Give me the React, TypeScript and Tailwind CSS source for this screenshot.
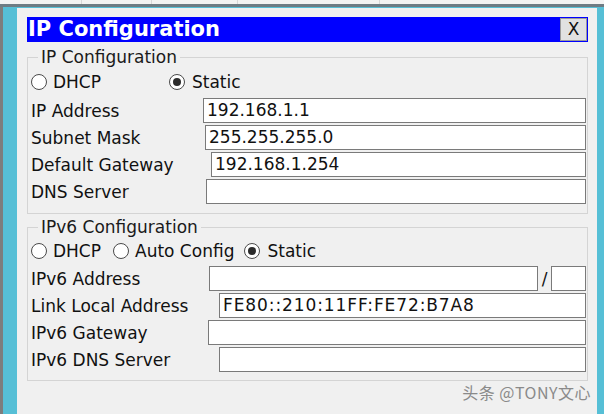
const ipv4Rows = [
  { label: "IP Address", left: 172, value: "192.168.1.1" },
  { label: "Subnet Mask", left: 174, value: "255.255.255.0" },
  { label: "Default Gateway", left: 180, value: "192.168.1.254" },
  { label: "DNS Server", left: 175, value: "" },
]

function Radio({ checked }: { checked?: boolean }) {
  return (
    <span className="flex h-[16px] w-[16px] flex-none items-center justify-center rounded-full border border-[#4a4a4a] bg-white">
      {checked && <span className="h-[8px] w-[8px] rounded-full bg-[#2b2b2b]" />}
    </span>
  )
}

function Field({ value, className = "" }: { value?: string; className?: string }) {
  return (
    <div
      className={
        "h-[25px] border border-[#7a7a7a] bg-white pl-[3px] text-[17px] leading-[23px] text-[#111] whitespace-nowrap overflow-hidden " +
        className
      }
    >
      {value}
    </div>
  )
}

export default function App() {
  return (
    <div className="flex h-[414px] w-[604px] flex-col overflow-hidden bg-[#56bfd6] font-['DejaVu_Sans',sans-serif] leading-[20px]">
      {/* strip of the window behind */}
      <div className="flex h-[4px] flex-none bg-[#f3f3f3]">
        <div className="w-[82px] border-r border-[#d8d8d8]" />
        <div className="w-[70px] border-r border-[#d8d8d8]" />
        <div className="w-[86px] border-r border-[#d8d8d8]" />
        <div className="w-[142px] border-r border-[#d8d8d8]" />
      </div>
      <div className="h-[3px] flex-none bg-[#6e7c84]" />

      <div className="flex flex-1 border-l-[3px] border-[#7d7d7d] pt-[1px]">
        <div className="ml-[14px] mr-[7px] flex flex-1 flex-col bg-[#f0f0f0] pl-[10px] pr-[9px] pt-[9px]">
          {/* title bar */}
          <div className="flex h-[25px] items-center justify-between bg-[#0000ff] pl-[1px]">
            <span className="text-[21px] font-bold leading-none text-white">IP Configuration</span>
            <button className="mr-[1px] flex h-[23px] w-[27px] items-center justify-center border border-[#9a9a9a] bg-[#e1e1e1] text-[17px] leading-none text-[#111]">
              X
            </button>
          </div>

          {/* IPv4 group */}
          <fieldset className="mt-[5px] border border-[#d4d4d4] pb-[9px] pl-[3px] pr-[1px]">
            <legend className="ml-[7px] px-[3px] text-[17px] leading-[20px] text-[#1a1a1a]">IP Configuration</legend>
            <div className="mt-[5px] flex h-[20px] items-center text-[17px] text-[#111]">
              <div className="flex w-[138px] items-center gap-[6px]">
                <Radio />
                <span>DHCP</span>
              </div>
              <div className="flex items-center gap-[7px]">
                <Radio checked />
                <span>Static</span>
              </div>
            </div>
            <div className="mt-[6px] flex flex-col gap-[2px]">
              {ipv4Rows.map((row) => (
                <div key={row.label} className="flex h-[25px] items-center">
                  <span className="flex-none text-[17px] text-[#111]" style={{ width: row.left }}>
                    {row.label}
                  </span>
                  <Field value={row.value} className="flex-1" />
                </div>
              ))}
            </div>
          </fieldset>

          {/* IPv6 group */}
          <fieldset className="mt-[3px] border border-[#d4d4d4] pb-[8px] pl-[3px] pr-[1px]">
            <legend className="ml-[7px] px-[3px] text-[17px] leading-[20px] text-[#1a1a1a]">IPv6 Configuration</legend>
            <div className="mt-[4px] flex h-[20px] items-center text-[17px] text-[#111]">
              <div className="flex items-center gap-[6px]">
                <Radio />
                <span>DHCP</span>
              </div>
              <div className="ml-[12px] flex items-center gap-[6px]">
                <Radio />
                <span>Auto Config</span>
              </div>
              <div className="ml-[10px] flex items-center gap-[7px]">
                <Radio checked />
                <span>Static</span>
              </div>
            </div>
            <div className="mt-[5px] flex flex-col gap-[2px] text-[17px] text-[#111]">
              <div className="flex h-[25px] items-center">
                <span className="w-[178px] flex-none">IPv6 Address</span>
                <Field className="flex-1" />
                <span className="w-[13px] flex-none text-center">/</span>
                <Field className="w-[35px] flex-none" />
              </div>
              <div className="flex h-[25px] items-center">
                <span className="w-[188px] flex-none">Link Local Address</span>
                <Field value="FE80::210:11FF:FE72:B7A8" className="flex-1 tracking-[0.9px]" />
              </div>
              <div className="flex h-[25px] items-center">
                <span className="w-[177px] flex-none">IPv6 Gateway</span>
                <Field className="flex-1" />
              </div>
              <div className="flex h-[25px] items-center">
                <span className="w-[188px] flex-none">IPv6 DNS Server</span>
                <Field className="flex-1" />
              </div>
            </div>
          </fieldset>

          <div className="mr-[-3px] mt-[1px] flex justify-end">
            <span className="font-['Noto_Sans_CJK_SC',sans-serif] text-[16px] leading-[20px] tracking-[0.5px] text-[#8a8a8a]">
              头条 @TONY文心
            </span>
          </div>
        </div>
      </div>
    </div>
  )
}
